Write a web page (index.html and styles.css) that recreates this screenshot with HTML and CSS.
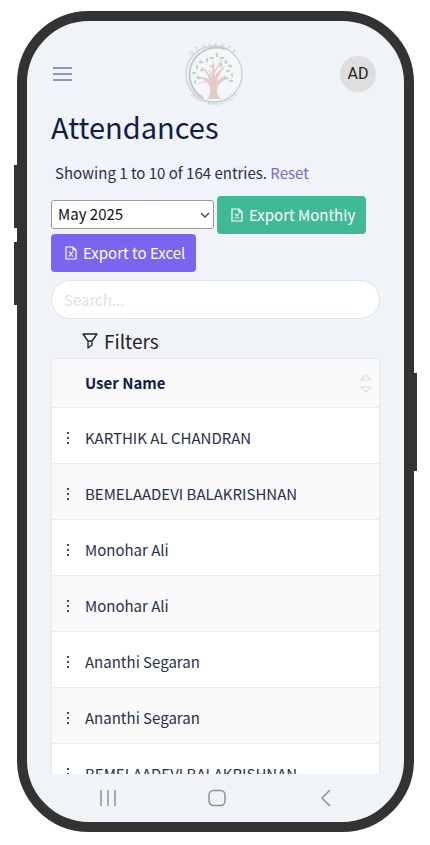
FILE: index.html
```html
<!DOCTYPE html>
<html lang="en">
<head>
    <meta charset="utf-8">
    <meta name="viewport" content="width=device-width, initial-scale=1">
    <title>Attendances</title>
    <link rel="stylesheet" href="styles.css">
</head>
<body>
    <div class="phone">
        <span class="side-key volume-up"></span>
        <span class="side-key volume-down"></span>
        <span class="side-key power"></span>

        <div class="screen">
            <header class="topbar">
                <button class="menu-btn" type="button" aria-label="Menu">
                    <svg width="20" height="16" viewBox="0 0 20 16" fill="none" stroke="#8698bb" stroke-width="2"><path d="M1 2h19M1 8h19M1 14h19"/></svg>
                </button>
                <svg class="logo" width="66" height="72" viewBox="0 0 66 72" fill="none">
                    <defs>
                        <path id="arc-top" d="M6 25A30 30 0 0 1 60 25"/>
                        <path id="arc-bottom" d="M3 46A32 32 0 0 0 63 46"/>
                    </defs>
                    <circle cx="33" cy="36" r="28" fill="#f4f7fa" stroke="#d0d2d8" stroke-width="1.5"/>
                    <path d="M44 11A27 27 0 0 0 22 60" stroke="#c5c7cd" stroke-width="2"/>
                    <path d="M26 61c4-5 4-10 2-14-3-5-8-6-13-9 6 1 10 1 13 4-1-6-5-10-9-14 6 3 9 7 12 13 0-7 0-12 2-19 0 7 1 11 1 17 2-6 6-8 10-11-2 5-7 9-8 15 5-4 9-3 15-3-7 1-12 4-14 8-2 5-1 9 3 13z" fill="#e5cbc8"/>
                    <path d="M33 43l-5-11M35 45l9-7M33 35l7-12M28 42l-11 4" stroke="#e5cbc8" stroke-width="1.3"/>
                    <g fill="#b6dbc0">
                        <ellipse cx="31" cy="20" rx="2.5" ry="1.2"/><ellipse cx="36" cy="17" rx="1.2" ry="2.5"/>
                        <ellipse cx="41" cy="20" rx="2.5" ry="1.2"/><ellipse cx="45" cy="24" rx="1.5" ry="2"/>
                        <ellipse cx="26" cy="22" rx="1.3" ry="2.5"/><ellipse cx="20" cy="24" rx="2.5" ry="1.2"/>
                        <ellipse cx="16" cy="29" rx="1.2" ry="2.5"/><ellipse cx="21" cy="32" rx="2" ry="1.2"/>
                        <ellipse cx="13" cy="35" rx="2" ry="1.2"/><ellipse cx="18" cy="40" rx="2.5" ry="1.2"/>
                        <ellipse cx="14" cy="44" rx="1.2" ry="2"/><ellipse cx="40" cy="27" rx="1.3" ry="2.5"/>
                        <ellipse cx="49" cy="28" rx="2.5" ry="1.2"/><ellipse cx="47" cy="33" rx="2" ry="1.2"/>
                        <ellipse cx="51" cy="37" rx="1.2" ry="2.5"/><ellipse cx="45" cy="40" rx="2.5" ry="1.2"/>
                        <ellipse cx="50" cy="43" rx="2.5" ry="1.2"/><ellipse cx="31" cy="28" rx="2" ry="1.2"/>
                    </g>
                    <text class="logo-name"><textPath href="#arc-top" startOffset="50%" text-anchor="middle">OPULENCE</textPath></text>
                    <text class="logo-sub"><textPath href="#arc-bottom" startOffset="50%" text-anchor="middle">SECURITY SERVICES PTE LTD</textPath></text>
                </svg>
                <button class="avatar" type="button">AD</button>
            </header>

            <main class="content">
                <h1>Attendances</h1>
                <p class="summary">Showing 1 to 10 of 164 entries. <a href="#">Reset</a></p>

                <div class="actions">
                    <div class="month">
                        <select class="month-select" aria-label="Month">
                            <option>May 2025</option>
                        </select>
                        <svg class="chevron" width="10" height="6" viewBox="0 0 10 6" fill="none" stroke="#444" stroke-width="1.3"><path d="M1 1l4 4 4-4"/></svg>
                    </div>
                    <button class="btn btn-green" type="button">
                        <svg width="12" height="14" viewBox="0 0 12 14" fill="none" stroke="currentColor" stroke-width="1.2"><path d="M1 1h7l3 3v9H1zM8 1v3h3M4 5.5l4 5M8 5.5l-4 5"/></svg>
                        Export Monthly
                    </button>
                    <button class="btn btn-purple" type="button">
                        <svg width="12" height="14" viewBox="0 0 12 14" fill="none" stroke="currentColor" stroke-width="1.2"><path d="M1 1h7l3 3v9H1zM8 1v3h3M4 5.5l4 5M8 5.5l-4 5"/></svg>
                        Export to Excel
                    </button>
                </div>

                <input class="search" type="search" placeholder="Search..." aria-label="Search">

                <button class="filters" type="button">
                    <svg width="16" height="16" viewBox="0 0 16 16" fill="none" stroke="#222" stroke-width="1.3" stroke-linejoin="round"><path d="M1 1h14l-5 7v4l-4 3V8zM6 8h4"/></svg>
                    Filters
                </button>

                <table class="grid">
                    <thead>
                        <tr>
                            <th class="menu-col"></th>
                            <th>
                                <div class="head-cell">
                                    User Name
                                    <svg width="12" height="20" viewBox="0 0 12 20" fill="none" stroke="#dcdcdc" stroke-width="1.2"><path d="M1 7h10L6 2zM1 14h10l-5 5z"/></svg>
                                </div>
                            </th>
                        </tr>
                    </thead>
                    <tbody>
                        <tr><td><button class="dots" type="button" aria-label="Row menu"><i></i><i></i><i></i></button></td><td>KARTHIK AL CHANDRAN</td></tr>
                        <tr><td><button class="dots" type="button" aria-label="Row menu"><i></i><i></i><i></i></button></td><td>BEMELAADEVI BALAKRISHNAN</td></tr>
                        <tr><td><button class="dots" type="button" aria-label="Row menu"><i></i><i></i><i></i></button></td><td>Monohar Ali</td></tr>
                        <tr><td><button class="dots" type="button" aria-label="Row menu"><i></i><i></i><i></i></button></td><td>Monohar Ali</td></tr>
                        <tr><td><button class="dots" type="button" aria-label="Row menu"><i></i><i></i><i></i></button></td><td>Ananthi Segaran</td></tr>
                        <tr><td><button class="dots" type="button" aria-label="Row menu"><i></i><i></i><i></i></button></td><td>Ananthi Segaran</td></tr>
                        <tr><td><button class="dots" type="button" aria-label="Row menu"><i></i><i></i><i></i></button></td><td>BEMELAADEVI BALAKRISHNAN</td></tr>
                    </tbody>
                </table>
            </main>

            <nav class="navbar">
                <button type="button" aria-label="Recent apps">
                    <svg width="20" height="18" viewBox="0 0 20 18" fill="none" stroke="#8d9095" stroke-width="1.5"><path d="M4 1v16M11 1v16M18 1v16"/></svg>
                </button>
                <button type="button" aria-label="Home">
                    <svg width="18" height="18" viewBox="0 0 18 18" fill="none" stroke="#8d9095" stroke-width="1.5"><rect x="1" y="1.5" width="16" height="15" rx="4.5"/></svg>
                </button>
                <button type="button" aria-label="Back">
                    <svg width="18" height="18" viewBox="0 0 18 18" fill="none" stroke="#8d9095" stroke-width="1.5"><path d="M14 1L6 9l8 8"/></svg>
                </button>
            </nav>
        </div>
    </div>
</body>
</html>
```
FILE: styles.css
```css
* {
    box-sizing: border-box;
}

body {
    margin: 0;
    padding: 11px 16px 13px 17px;
    height: 100vh;
    background-color: #fff;
    font-family: "Noto Sans CJK SC", "Noto Sans", sans-serif;
    font-size: 15px;
    line-height: 20px;
    color: #27304a;
}

button {
    padding: 0;
    border: none;
    background: none;
    font: inherit;
    color: inherit;
    cursor: pointer;
}

svg {
    display: block;
}

/* Phone frame */
.phone {
    position: relative;
    height: 100%;
    border: 10px solid #333;
    border-radius: 72px;
    background-color: #f0f4f9;
}

.side-key {
    position: absolute;
    width: 3px;
    background-color: #333;
}

.volume-up {
    left: -13px;
    top: 144px;
    height: 63px;
}

.volume-down {
    left: -13px;
    top: 221px;
    height: 63px;
}

.power {
    right: -13px;
    top: 352px;
    height: 98px;
}

.screen {
    display: flex;
    flex-direction: column;
    height: 100%;
    border-radius: 62px;
    overflow: hidden;
}

/* Top bar */
.topbar {
    display: grid;
    grid-template-columns: 1fr auto 1fr;
    align-items: center;
    margin-bottom: -5px;
    padding: 17px 28px 0 25px;
}

.menu-btn {
    justify-self: start;
}

.avatar {
    justify-self: end;
    width: 36px;
    height: 36px;
    border-radius: 50%;
    background-color: #dedede;
    font-family: Roboto, sans-serif;
    font-size: 16px;
    color: #222;
}

.logo-name {
    font-size: 5px;
    fill: #bfc1c8;
    letter-spacing: 3px;
}

.logo-sub {
    font-size: 4px;
    fill: #bfc1c8;
}

/* Page */
.content {
    flex: 1;
    min-height: 0;
    overflow: hidden;
    padding: 0 24px;
}

h1 {
    margin: 0;
    font-size: 29px;
    line-height: 42px;
    font-weight: 400;
    color: #101d45;
}

.summary {
    margin: 16px 4px 13px;
}

.summary a {
    color: #7d68cf;
    text-decoration: none;
}

.actions {
    display: flex;
    flex-wrap: wrap;
    align-items: center;
    column-gap: 3px;
}

.month {
    position: relative;
    padding-bottom: 2px;
}

.month-select {
    display: block;
    appearance: none;
    width: 163px;
    height: 29px;
    padding: 0 6px;
    border: 1px solid #999;
    border-radius: 3px;
    background-color: #fff;
    font: inherit;
    color: #111;
}

.chevron {
    position: absolute;
    right: 4px;
    top: 12px;
    pointer-events: none;
}

.btn {
    display: flex;
    align-items: center;
    gap: 6px;
    height: 38px;
    padding: 0 11px 0 14px;
    border-radius: 4px;
    color: #fff;
}

.btn-green {
    background-color: #42b995;
}

.btn-purple {
    background-color: #7c65ee;
}

.search {
    display: block;
    appearance: none;
    width: 100%;
    height: 39px;
    margin: 8px 0;
    padding: 0 12px;
    border: 1px solid #e0e4eb;
    border-radius: 20px;
    background-color: #fff;
    font: inherit;
}

.search::placeholder {
    color: #dce1e9;
}

.filters {
    display: flex;
    align-items: center;
    gap: 6px;
    margin: 0 0 3px 31px;
    font-size: 19px;
    line-height: 28px;
    color: #222;
}

/* Table */
.grid {
    width: 100%;
    border: 1px solid #e4e8ed;
    border-radius: 4px 4px 0 0;
    border-spacing: 0;
    background-color: #fff;
    overflow: hidden;
}

.grid th,
.grid td {
    height: 56px;
    padding: 4px 0 0;
    border-bottom: 1px solid #e9ebee;
    text-align: left;
}

.grid th {
    height: 49px;
    padding: 0;
    background-color: #fafafa;
    color: #101d45;
}

.grid .menu-col {
    width: 33px;
}

.grid tbody tr:nth-child(even) {
    background-color: #fafafa;
}

.head-cell {
    display: flex;
    align-items: center;
    justify-content: space-between;
    padding-right: 7px;
}

.dots {
    display: flex;
    flex-direction: column;
    align-items: center;
    gap: 3px;
    width: 32px;
}

.dots i {
    width: 2px;
    height: 2px;
    background-color: #444b5c;
}

/* Android navigation */
.navbar {
    display: flex;
    justify-content: space-between;
    padding: 15px 70px;
}
```
